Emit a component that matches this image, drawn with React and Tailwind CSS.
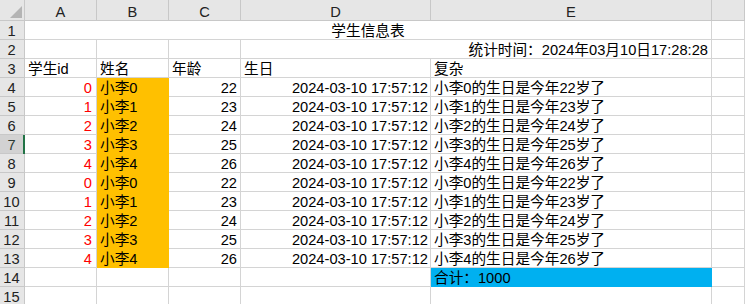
import React from "react";

const font = { fontFamily: '"Liberation Sans", "Noto Sans CJK SC", sans-serif' };

const cols = ["A", "B", "C", "D", "E", ""];

function Cell({ children, className = "" }) {
  return (
    <div
      className={
        "h-[19px] border-r border-b border-[#d4d4d4] flex items-end overflow-visible whitespace-nowrap leading-[15px] text-[14.67px] text-black " +
        className
      }
    >
      {children}
    </div>
  );
}

function RowHead({ n, selected }) {
  return (
    <div
      className={
        "h-[19px] border-r border-b border-[#c8c8c8] flex items-end justify-center leading-[15px] text-[14.67px] relative " +
        (selected ? "bg-[#d2d2d2] text-[#2b3a32]" : "bg-[#e6e6e6] text-[#222]")
      }
    >
      <span className="pr-[1px]">{n}</span>
      {selected && <div className="absolute right-[-1px] top-0 h-[19px] w-[2px] bg-[#217346]" />}
    </div>
  );
}

export default function App() {
  const data = [];
  for (let k = 0; k < 10; k++) {
    const i = k % 5;
    data.push({ id: i, name: "小李" + i, age: 22 + i, bday: "2024-03-10 17:57:12", desc: `小李${i}的生日是今年${22 + i}岁了` });
  }
  return (
    <div className="w-[745px] h-[304px] overflow-hidden bg-white" style={font}>
      <div className="grid grid-cols-[25px_72px_72px_72px_190px_281px_1fr]">
        {/* header */}
        <div className="h-[21px] bg-[#e6e6e6] border-r border-b border-[#c8c8c8] relative">
          <svg className="absolute left-[10px] top-[6px]" width="12" height="12" viewBox="0 0 12 12">
            <polygon points="12,0 12,12 0,12" fill="#b4b4b4" />
          </svg>
        </div>
        {cols.map((c, i) => (
          <div
            key={i}
            className="h-[21px] bg-[#e6e6e6] border-r border-b border-[#c8c8c8] flex items-end justify-center leading-[16px] text-[14.67px] text-[#222]"
          >
            {c}
          </div>
        ))}

        {/* row 1 */}
        <RowHead n={1} />
        <Cell className="col-span-5 justify-center">学生信息表</Cell>
        <Cell />

        {/* row 2 */}
        <RowHead n={2} />
        <Cell />
        <Cell />
        <Cell />
        <Cell className="col-span-2 justify-end pr-[3px]">统计时间：2024年03月10日17:28:28</Cell>
        <Cell />

        {/* row 3 */}
        <RowHead n={3} />
        <Cell className="pl-[3px]">学生id</Cell>
        <Cell className="pl-[3px]">姓名</Cell>
        <Cell className="pl-[3px]">年龄</Cell>
        <Cell className="pl-[3px]">生日</Cell>
        <Cell className="pl-[3px]">复杂</Cell>
        <Cell />

        {data.map((d, k) => (
          <React.Fragment key={k}>
            <RowHead n={k + 4} selected={k + 4 === 7} />
            <Cell className="justify-end pr-[4px] !text-[#ff0000]">{d.id}</Cell>
            <Cell className="pl-[3px] bg-[#ffc000] !border-[#ffc000]">{d.name}</Cell>
            <Cell className="justify-end pr-[3px]">{d.age}</Cell>
            <Cell className="justify-end pr-[2px]">{d.bday}</Cell>
            <Cell className="pl-[3px]">{d.desc}</Cell>
            <Cell />
          </React.Fragment>
        ))}

        {/* row 14 */}
        <RowHead n={14} />
        <Cell />
        <Cell />
        <Cell />
        <Cell />
        <Cell className="pl-[3px] bg-[#00b0f0] !border-[#00b0f0]">合计：1000</Cell>
        <Cell />

        {/* row 15 */}
        <RowHead n={15} />
        <Cell />
        <Cell />
        <Cell />
        <Cell />
        <Cell />
        <Cell />
      </div>
    </div>
  );
}
